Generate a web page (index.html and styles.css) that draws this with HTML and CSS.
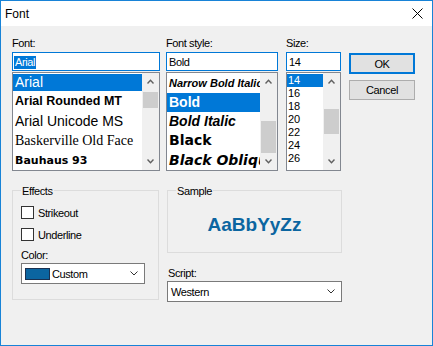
FILE: index.html
```html
<!DOCTYPE html>
<html lang="en">
<head>
    <meta charset="UTF-8">
    <title>Font</title>
    <link rel="stylesheet" href="styles.css">
</head>
<body>
    <div class="window">
        <div class="titlebar">
            <span class="title">Font</span>
            <svg class="close" width="11" height="11" viewBox="0 0 11 11">
                <path d="M0.5 0.5 L10.5 10.5 M10.5 0.5 L0.5 10.5" stroke="#000" stroke-width="1" fill="none"/>
            </svg>
        </div>
        <div class="content">
            <div class="top">
                <div class="col col-font">
                    <div class="lbl">Font:</div>
                    <div class="textbox"><span class="tb-text selected-text">Arial</span></div>
                    <div class="list">
                        <ul class="items">
                            <li class="item selected f-arial">Arial</li>
                            <li class="item f-rounded">Arial Rounded MT</li>
                            <li class="item f-arial">Arial Unicode MS</li>
                            <li class="item f-basker">Baskerville Old Face</li>
                            <li class="item f-bauhaus">Bauhaus 93</li>
                        </ul>
                        <div class="scrollbar">
                            <div class="arrow"><svg width="7" height="5" viewBox="0 0 7 5"><polyline points="0.5,4.5 3.5,1.2 6.5,4.5" stroke="#606060" stroke-width="1.4" fill="none"/></svg></div>
                            <div class="track"><div class="thumb thumb-font"></div></div>
                            <div class="arrow"><svg width="7" height="5" viewBox="0 0 7 5"><polyline points="0.5,0.5 3.5,3.8 6.5,0.5" stroke="#606060" stroke-width="1.4" fill="none"/></svg></div>
                        </div>
                    </div>
                </div>
                <div class="col col-style">
                    <div class="lbl">Font style:</div>
                    <div class="textbox"><span class="tb-text">Bold</span></div>
                    <div class="list">
                        <ul class="items">
                            <li class="item s-narrow">Narrow Bold Italic</li>
                            <li class="item selected s-bold">Bold</li>
                            <li class="item s-bolditalic">Bold Italic</li>
                            <li class="item s-black">Black</li>
                            <li class="item s-blackobl">Black Oblique</li>
                        </ul>
                        <div class="scrollbar">
                            <div class="arrow"><svg width="7" height="5" viewBox="0 0 7 5"><polyline points="0.5,4.5 3.5,1.2 6.5,4.5" stroke="#606060" stroke-width="1.4" fill="none"/></svg></div>
                            <div class="track"><div class="thumb thumb-style"></div></div>
                            <div class="arrow"><svg width="7" height="5" viewBox="0 0 7 5"><polyline points="0.5,0.5 3.5,3.8 6.5,0.5" stroke="#606060" stroke-width="1.4" fill="none"/></svg></div>
                        </div>
                    </div>
                </div>
                <div class="col col-size">
                    <div class="lbl">Size:</div>
                    <div class="textbox"><span class="tb-text">14</span></div>
                    <div class="list">
                        <ul class="items">
                            <li class="item size selected">14</li>
                            <li class="item size">16</li>
                            <li class="item size">18</li>
                            <li class="item size">20</li>
                            <li class="item size">22</li>
                            <li class="item size">24</li>
                            <li class="item size">26</li>
                        </ul>
                        <div class="scrollbar">
                            <div class="arrow"><svg width="7" height="5" viewBox="0 0 7 5"><polyline points="0.5,4.5 3.5,1.2 6.5,4.5" stroke="#606060" stroke-width="1.4" fill="none"/></svg></div>
                            <div class="track"><div class="thumb thumb-size"></div></div>
                            <div class="arrow"><svg width="7" height="5" viewBox="0 0 7 5"><polyline points="0.5,0.5 3.5,3.8 6.5,0.5" stroke="#606060" stroke-width="1.4" fill="none"/></svg></div>
                        </div>
                    </div>
                </div>
                <div class="buttons">
                    <button class="btn btn-default">OK</button>
                    <button class="btn">Cancel</button>
                </div>
            </div>

            <div class="bottom">
                <fieldset class="group effects">
                    <legend>Effects</legend>
                    <div class="check first"><span class="box"></span>Strikeout</div>
                    <div class="check"><span class="box"></span>Underline</div>
                    <div class="lbl color-lbl">Color:</div>
                    <div class="combo color-combo">
                        <span class="swatch"></span>
                        <span class="combo-text">Custom</span>
                        <svg class="chev" width="8" height="5" viewBox="0 0 8 5"><polyline points="0.5,0.5 4,4 7.5,0.5" stroke="#333" stroke-width="1" fill="none"/></svg>
                    </div>
                </fieldset>
                <div class="right">
                    <fieldset class="group sample">
                        <legend>Sample</legend>
                        <div class="sample-text">AaBbYyZz</div>
                    </fieldset>
                    <div class="lbl script-lbl">Script:</div>
                    <div class="combo script-combo">
                        <span class="combo-text">Western</span>
                        <svg class="chev" width="8" height="5" viewBox="0 0 8 5"><polyline points="0.5,0.5 4,4 7.5,0.5" stroke="#333" stroke-width="1" fill="none"/></svg>
                    </div>
                </div>
            </div>
        </div>
    </div>
</body>
</html>
```

FILE: styles.css
```css
* {
    box-sizing: border-box;
}
body {
    margin: 0;
    font-family: "Liberation Sans", Arial, sans-serif;
    font-size: 11px;
    letter-spacing: -0.4px;
    color: #000;
    background: #f0f0f0;
}
.window {
    width: 433px;
    height: 346px;
    border: 1px solid #1883d7;
    background: #f0f0f0;
}
.titlebar {
    height: 25px;
    background: #fff;
    display: flex;
    align-items: center;
    justify-content: space-between;
    padding: 0 9px 0 4px;
}
.title {
    font-size: 12px;
    letter-spacing: 0;
}
.content {
    padding: 11px 0 0 11px;
}
.top {
    display: flex;
}
.col-font {
    width: 148px;
    margin-right: 6px;
}
.col-style {
    width: 112px;
    margin-right: 8px;
}
.col-size {
    width: 55px;
    margin-right: 8px;
}
.lbl {
    height: 13px;
    line-height: 13px;
    white-space: nowrap;
}
.col .lbl {
    margin-bottom: 2px;
}
.textbox {
    height: 19px;
    line-height: 17px;
    border: 1px solid #0078d7;
    background: #fff;
    padding-left: 1px;
    margin-bottom: 1px;
}
.tb-text {
    display: inline-block;
    padding: 0 1px;
    line-height: 13px;
    vertical-align: middle;
}
.selected-text {
    background: #0078d7;
    color: #fff;
}
.list {
    height: 99px;
    border: 1px solid #828790;
    background: #fff;
    display: flex;
}
.items {
    list-style: none;
    margin: 0;
    padding: 1px 0 0;
    flex: 1;
    min-width: 0;
    overflow: hidden;
}
.item {
    padding-left: 2px;
    white-space: nowrap;
    overflow: hidden;
    letter-spacing: 0;
    height: 20px;
    line-height: 20px;
}
.item.selected {
    background: #0078d7;
    color: #fff;
}
.f-arial {
    font-size: 14px;
}
.f-arial.selected {
    height: 17px;
    line-height: 17px;
}
.f-rounded {
    font-size: 12.5px;
    font-weight: bold;
}
.f-basker {
    font-family: "Liberation Serif", serif;
    font-size: 14px;
}
.f-bauhaus {
    font-family: "DejaVu Sans", sans-serif;
    font-weight: bold;
    font-size: 11px;
}
.s-narrow {
    font-size: 11px;
    font-weight: bold;
    font-style: italic;
    height: 19px;
    line-height: 19px;
}
.s-bold {
    font-size: 14px;
    font-weight: bold;
    height: 19px;
    line-height: 19px;
}
.s-bolditalic {
    font-size: 14px;
    font-weight: bold;
    font-style: italic;
    height: 19px;
    line-height: 19px;
}
.s-black {
    font-family: "DejaVu Sans", sans-serif;
    font-size: 14px;
    font-weight: bold;
    height: 19px;
    line-height: 19px;
}
.s-blackobl {
    font-family: "DejaVu Sans", sans-serif;
    font-size: 14px;
    font-weight: bold;
    font-style: oblique;
}
.item.size {
    padding-left: 1px;
    height: 13px;
    line-height: 13px;
    font-size: 11px;
}
.scrollbar {
    width: 17px;
    background: #f0f0f0;
    display: flex;
    flex-direction: column;
}
.arrow {
    height: 17px;
    display: flex;
    align-items: center;
    justify-content: center;
}
.track {
    flex: 1;
    padding: 0 1px;
}
.thumb {
    background: #cdcdcd;
}
.thumb-font {
    margin-top: 2px;
    height: 16px;
}
.thumb-style {
    margin-top: 31px;
    height: 32px;
}
.thumb-size {
    margin-top: 19px;
    height: 25px;
}
.buttons {
    width: 66px;
    padding-top: 16px;
    display: flex;
    flex-direction: column;
    gap: 6px;
}
.btn {
    font: inherit;
    letter-spacing: -0.4px;
    color: #000;
    background: #e1e1e1;
    border: 1px solid #adadad;
    height: 20px;
    padding: 0;
}
.btn-default {
    border: 2px solid #0078d7;
    height: 21px;
}
.bottom {
    display: flex;
    margin-top: 11px;
}
.group {
    margin: 0;
    border: 1px solid #dcdcdc;
    padding: 0 8px;
    min-width: 0;
}
.group legend {
    padding: 3px 1px 0;
    line-height: 13px;
}
.effects {
    width: 147px;
    height: 118px;
    margin-right: 8px;
}
.check {
    display: flex;
    align-items: center;
    gap: 4px;
    height: 13px;
    margin-top: 9px;
}
.check.first {
    margin-top: 8px;
}
.box {
    width: 13px;
    height: 13px;
    border: 1px solid #333;
    background: #fff;
}
.color-lbl {
    margin-top: 8px;
    margin-bottom: 1px;
}
.combo {
    height: 21px;
    border: 1px solid #7a7a7a;
    background: #fff;
    display: flex;
    align-items: center;
}
.color-combo {
    width: 124px;
    padding: 0 6px 0 3px;
}
.swatch {
    width: 25px;
    height: 12px;
    background: #0b65a0;
    border: 1px solid #1a3050;
}
.color-combo .combo-text {
    margin-left: 2px;
}
.combo-text {
    flex: 1;
}
.right {
    width: 175px;
}
.sample {
    height: 71px;
}
.sample-text {
    font-size: 19px;
    font-weight: bold;
    letter-spacing: 0;
    line-height: 22px;
    color: #0b65a0;
    text-align: center;
    margin-top: 16px;
}
.script-lbl {
    margin-top: 14px;
    margin-bottom: 1px;
    padding-left: 1px;
}
.script-combo {
    padding: 0 6px 0 3px;
}
```
